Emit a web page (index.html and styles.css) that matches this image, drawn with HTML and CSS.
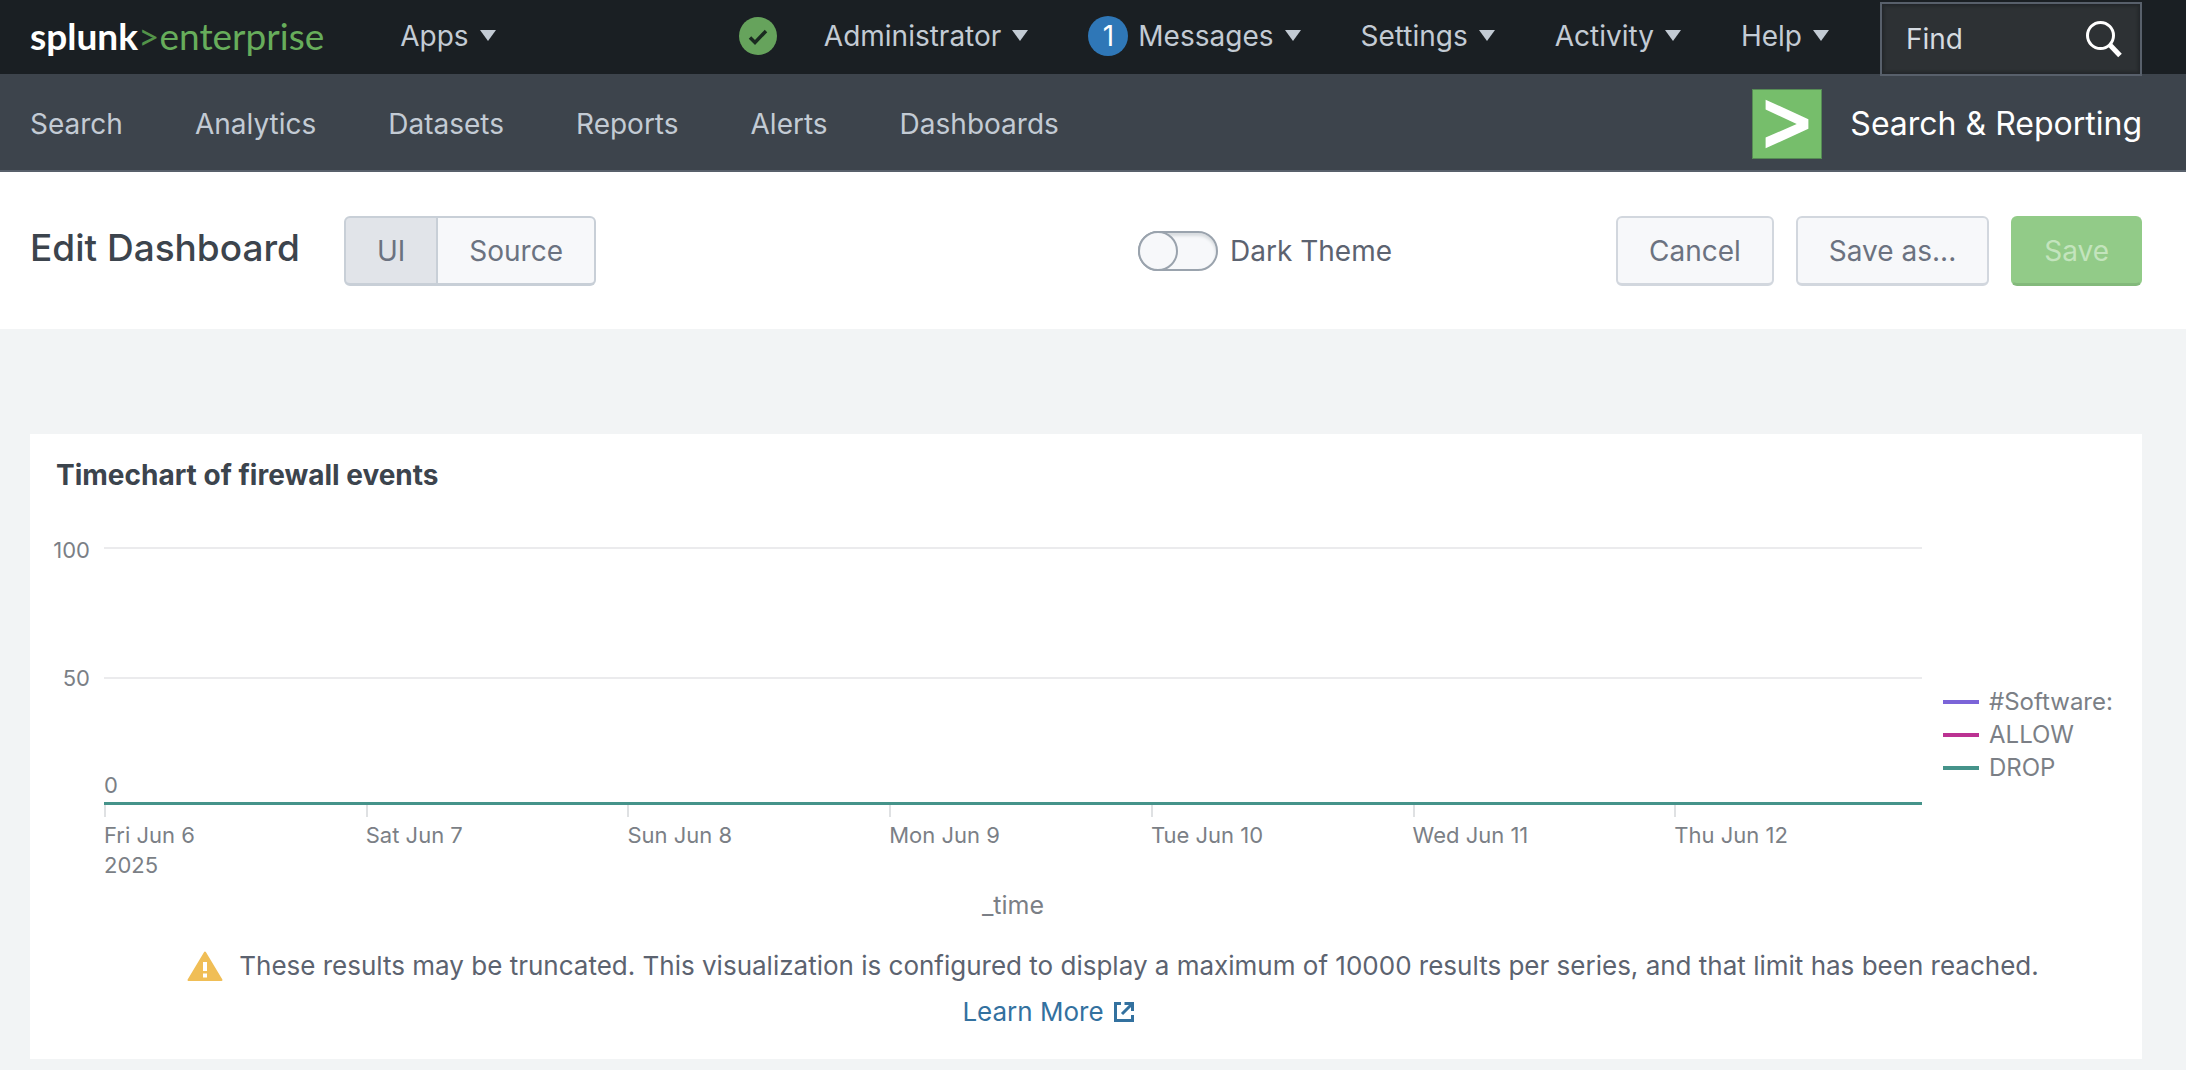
FILE: index.html
```html
<!DOCTYPE html>
<html lang="en">
<head>
<meta charset="utf-8">
<title>Edit Dashboard | Splunk</title>
<link rel="stylesheet" href="styles.css">
</head>
<body>
<header>
  <nav class="topbar" aria-label="Global">
    <a class="logo" href="#"><b>splunk</b><span class="logo-gt">&gt;</span><span>enterprise</span></a>
    <button class="menu" type="button">Apps<i class="caret"></i></button>
    <div class="topbar-right">
      <button class="health" type="button" aria-label="Health status">
        <svg width="38" height="38" viewBox="0 0 38 38"><circle cx="19" cy="19" r="19" fill="#66a35c"/><path d="M11 20.500l5 5L27 14" fill="none" stroke="#1a2a20" stroke-width="3.500"/></svg>
      </button>
      <button class="menu" type="button">Administrator<i class="caret"></i></button>
      <button class="menu" type="button"><span class="count">1</span>Messages<i class="caret"></i></button>
      <button class="menu" type="button">Settings<i class="caret"></i></button>
      <button class="menu" type="button">Activity<i class="caret"></i></button>
      <button class="menu" type="button">Help<i class="caret"></i></button>
    </div>
    <label class="find">
      <input type="text" placeholder="Find" aria-label="Find">
      <svg width="36" height="38" viewBox="0 0 36 38" fill="none" stroke="#fff"><circle cx="14.500" cy="15.500" r="13" stroke-width="3"/><path d="M24 25l10 10.500" stroke-width="5"/></svg>
    </label>
  </nav>
  <nav class="appbar" aria-label="App">
    <a href="#">Search</a>
    <a href="#">Analytics</a>
    <a href="#">Datasets</a>
    <a href="#">Reports</a>
    <a href="#">Alerts</a>
    <a href="#">Dashboards</a>
    <a class="app" href="#">
      <svg width="70" height="70" viewBox="0 0 72 72"><rect width="72" height="72" fill="#568a55"/><rect x="1" y="1" width="70" height="70" fill="#76be6b"/><path d="M14 11L58 31v10L14 61V50L46 36 14 21z" fill="#fff"/></svg>
      Search &amp; Reporting
    </a>
  </nav>
</header>

<section class="toolbar">
  <h1>Edit Dashboard</h1>
  <div class="segmented" role="group" aria-label="Editor mode">
    <button class="btn active" type="button">UI</button>
    <button class="btn" type="button">Source</button>
  </div>
  <label class="theme"><input type="checkbox">Dark Theme</label>
  <div class="actions">
    <button class="btn" type="button">Cancel</button>
    <button class="btn" type="button">Save as...</button>
    <button class="btn save" type="button" disabled>Save</button>
  </div>
</section>

<main>
  <section class="panel">
    <h2>Timechart of firewall events</h2>
    <div class="chart">
      <div class="y-axis"><span>100</span><span>50</span></div>
      <div class="plot">
        <div class="band"></div>
        <div class="band last">0</div>
        <ol class="x-axis">
          <li>Fri Jun 6<br>2025</li>
          <li>Sat Jun 7</li>
          <li>Sun Jun 8</li>
          <li>Mon Jun 9</li>
          <li>Tue Jun 10</li>
          <li>Wed Jun 11</li>
          <li>Thu Jun 12</li>
        </ol>
        <div class="x-title">_time</div>
      </div>
      <ul class="legend">
        <li class="software">#Software:</li>
        <li class="allow">ALLOW</li>
        <li class="drop">DROP</li>
      </ul>
    </div>
    <p class="warning">
      <svg width="36" height="30" viewBox="0 0 36 30"><path d="M18 1.500L34.500 29h-33z" fill="#f0be56" stroke="#f0be56" stroke-width="2" stroke-linejoin="round"/><path d="M18 11v9M18 22.500v4" stroke="#fff" stroke-width="4"/></svg>
      These results may be truncated. This visualization is configured to display a maximum of 10000 results per series, and that limit has been reached.
    </p>
    <p class="more">
      <a href="#">Learn More
        <svg width="20" height="20" viewBox="0 0 20 20" fill="none" stroke="#33719f" stroke-width="3"><path d="M7 1.500H1.500v17h17V13M10.500 1.500h8V9M18 2L8 12"/></svg>
      </a>
    </p>
  </section>
</main>
</body>
</html>
```
FILE: styles.css
```css
*, *::before { box-sizing: border-box; }

body {
  margin: 0;
  background: #f2f4f5;
  color: #3c444d;
  font: 28px/34px Inter, "Liberation Sans", sans-serif;
}

h1, h2, p, ol, ul { margin: 0; padding: 0; }
ol, ul { list-style: none; }
a { text-decoration: none; }
button, input { font: inherit; }
svg { flex: none; }

/* Global bar */
.topbar {
  display: flex;
  align-items: center;
  height: 74px;
  padding: 0 44px 2px 30px;
  background: #1a1f23;
}

.logo {
  margin-right: 76px;
  color: #67ad5b;
  font: 37px/44px Lato, "Liberation Sans", sans-serif;
}
.logo b { color: #fff; }
.logo-gt { color: #539349; }

.menu, .health {
  display: flex;
  align-items: center;
  padding: 0;
  border: 0;
  background: none;
  color: #c3cbd4;
  white-space: nowrap;
}

.caret {
  margin: 0 0 2px 11px;
  border: 8px solid transparent;
  border-top: 11px solid #c3cbd4;
  border-bottom: 0;
}

.topbar-right {
  display: flex;
  align-items: center;
  gap: 60px;
  margin-left: auto;
  margin-right: 51px;
}
.health { margin-right: -13px; }

.count {
  width: 40px;
  height: 40px;
  margin-right: 10px;
  border-radius: 50%;
  background: #2f77b7;
  color: #fff;
  line-height: 40px;
  text-align: center;
}

.find {
  display: flex;
  align-items: center;
  width: 262px;
  height: 74px;
  margin-top: 6px;
  padding: 0 18px 0 24px;
  border: 2px solid #58606b;
  background: #2d3134;
  box-shadow: inset 0 0 3px 2px #23272a;
}
.find input {
  flex: 1;
  min-width: 0;
  padding: 0;
  border: 0;
  outline: 0;
  background: none;
  color: #e1e6eb;
}
.find input::placeholder { color: #d5dbe1; opacity: 1; }

/* App bar */
.appbar {
  display: flex;
  align-items: center;
  gap: 72px;
  height: 98px;
  padding: 4px 44px 0 30px;
  border-bottom: 2px solid #58606b;
  background: #3d444c;
}
.appbar a { color: #c3cbd4; }
.appbar .app {
  display: flex;
  align-items: center;
  gap: 28px;
  margin-left: auto;
  color: #fff;
  font-size: 32px;
}

/* Toolbar */
.toolbar {
  display: flex;
  align-items: center;
  padding: 44px 44px 43px 30px;
  background: #fff;
}
.toolbar h1 {
  margin-right: 44px;
  padding-bottom: 6px;
  font-size: 37px;
  line-height: 44px;
  font-weight: 500;
}

.btn {
  height: 70px;
  padding: 0 31px;
  border: 2px solid #d2d7de;
  border-bottom-width: 3px;
  border-radius: 6px;
  background: #f7f8fa;
  color: #6b7280;
}

.segmented { display: flex; }
.segmented .btn { border-color: #c8cfd7; }
.segmented .btn:first-child { border-radius: 6px 0 0 6px; }
.segmented .btn:last-child { border-left: 0; border-radius: 0 6px 6px 0; }
.segmented .active { background: #e1e4e9; }

.theme {
  display: flex;
  align-items: center;
  gap: 12px;
  margin: 0 224px 0 auto;
  color: #5c6370;
}
.theme input {
  appearance: none;
  width: 80px;
  height: 40px;
  margin: 0;
  border: 2px solid #9aa3ad;
  border-radius: 20px;
  background: #f7f8fa;
  box-shadow: inset 0 3px 3px #d8dcdf;
}
.theme input::before {
  content: "";
  display: block;
  width: 40px;
  height: 40px;
  margin: -2px;
  border: 2px solid #9aa3ad;
  border-radius: 50%;
  background: #f7f8fa;
}

.actions { display: flex; gap: 22px; }
.save {
  border-color: #92cb88 #92cb88 #83b97b;
  background: #92cb88;
  color: #c3e4bd;
}

/* Chart panel */
main { padding: 105px 44px 11px 30px; }
.panel {
  padding: 24px 0;
  background: #fff;
}
.panel h2 {
  padding: 0 26px;
  font-size: 28px;
  line-height: 34px;
  font-weight: 700;
}

.chart {
  display: grid;
  grid-template-columns: 74px 1fr 220px;
  margin-top: 43px;
  color: #7b7f86;
}

.y-axis {
  padding-right: 14px;
  font-size: 22px;
  line-height: 30px;
  text-align: right;
}
.y-axis span { display: block; height: 128px; }

.plot {
  margin-top: 12px;
  font-size: 22px;
  line-height: 30px;
}
.band {
  height: 130px;
  border-top: 2px solid #ebebed;
}
.band.last {
  display: flex;
  align-items: flex-end;
  height: 128px;
  padding-bottom: 2px;
  border-bottom: 3px solid #45938a;
}

.x-axis {
  display: grid;
  grid-template-columns: repeat(6, 261fr) 247fr;
}
.x-axis li::before {
  content: "";
  display: block;
  width: 2px;
  height: 12px;
  margin-bottom: 3px;
  background: #dfe1e3;
}

.x-title {
  margin-top: 10px;
  font-size: 25px;
  text-align: center;
}

.legend {
  padding: 150px 0 0 21px;
  font-size: 24px;
  line-height: 33px;
}
.legend li {
  display: flex;
  align-items: center;
  gap: 10px;
}
.legend li::before {
  content: "";
  width: 36px;
  height: 4px;
  background: currentColor;
}
.legend .software::before { background: #7b64d8; }
.legend .allow::before { background: #bb3292; }
.legend .drop::before { background: #45938a; }

/* Truncation notice */
.warning, .more {
  display: flex;
  align-items: center;
  justify-content: center;
  font-size: 26px;
  line-height: 46px;
}
.warning {
  gap: 16px;
  margin-top: 23px;
  padding-left: 54px;
  color: #5c6370;
}
.more { padding-right: 76px; }
.more a {
  display: flex;
  align-items: center;
  gap: 10px;
  color: #33719f;
}
```
